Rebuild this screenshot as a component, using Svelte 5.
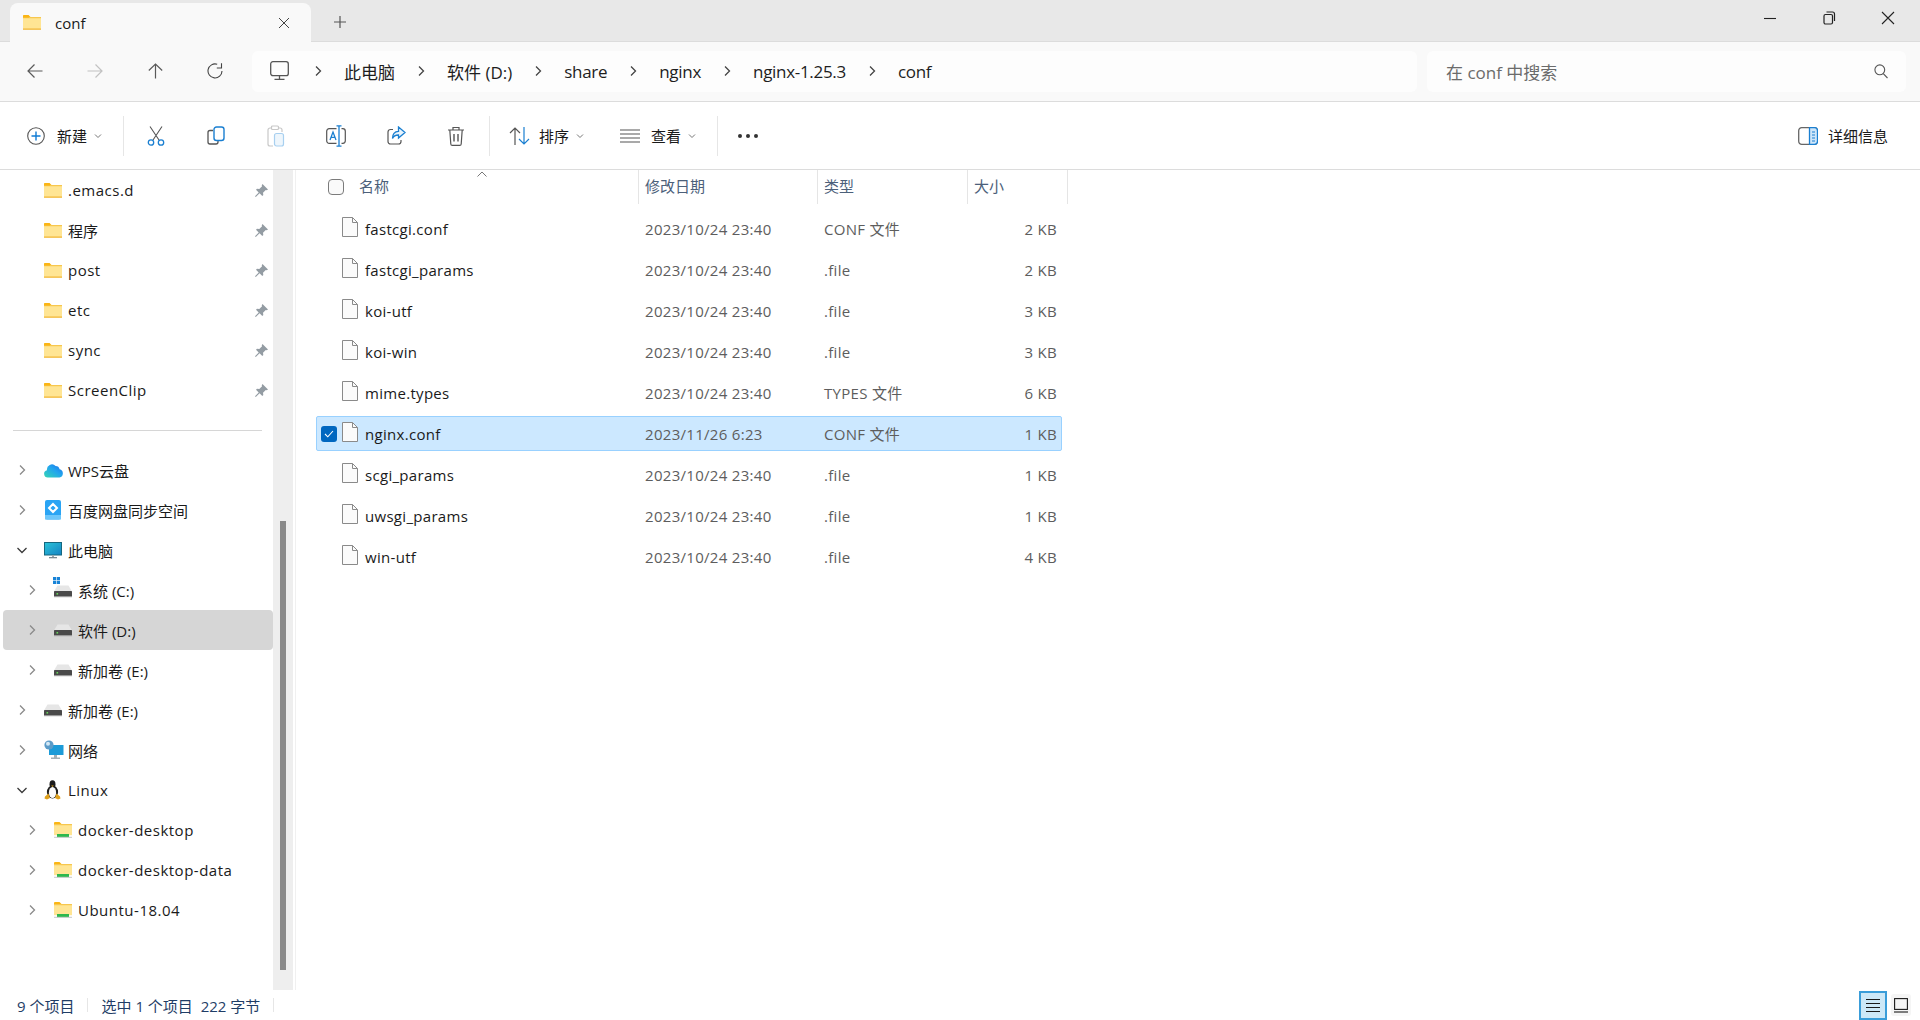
<script>
	const pinned = ['.emacs.d', '程序', 'post', 'etc', 'sync', 'ScreenClip'];

	const tree = [
		{ label: 'WPS云盘', icon: 'wps', level: 1, arrow: 'right' },
		{ label: '百度网盘同步空间', icon: 'baidu', level: 1, arrow: 'right' },
		{ label: '此电脑', icon: 'pc', level: 1, arrow: 'down' },
		{ label: '系统 (C:)', icon: 'sys', level: 2, arrow: 'right' },
		{ label: '软件 (D:)', icon: 'drive', level: 2, arrow: 'right', selected: true },
		{ label: '新加卷 (E:)', icon: 'drive', level: 2, arrow: 'right' },
		{ label: '新加卷 (E:)', icon: 'drive', level: 1, arrow: 'right' },
		{ label: '网络', icon: 'net', level: 1, arrow: 'right' },
		{ label: 'Linux', icon: 'tux', level: 1, arrow: 'down' },
		{ label: 'docker-desktop', icon: 'share', level: 2, arrow: 'right' },
		{ label: 'docker-desktop-data', icon: 'share', level: 2, arrow: 'right' },
		{ label: 'Ubuntu-18.04', icon: 'share', level: 2, arrow: 'right' }
	];

	const crumbs = ['此电脑', '软件 (D:)', 'share', 'nginx', 'nginx-1.25.3', 'conf'];

	const old = '2023/10/24 23:40';
	const files = [
		{ name: 'fastcgi.conf', date: old, type: 'CONF 文件', size: '2 KB' },
		{ name: 'fastcgi_params', date: old, type: '.file', size: '2 KB' },
		{ name: 'koi-utf', date: old, type: '.file', size: '3 KB' },
		{ name: 'koi-win', date: old, type: '.file', size: '3 KB' },
		{ name: 'mime.types', date: old, type: 'TYPES 文件', size: '6 KB' },
		{ name: 'nginx.conf', date: '2023/11/26 6:23', type: 'CONF 文件', size: '1 KB', selected: true },
		{ name: 'scgi_params', date: old, type: '.file', size: '1 KB' },
		{ name: 'uwsgi_params', date: old, type: '.file', size: '1 KB' },
		{ name: 'win-utf', date: old, type: '.file', size: '4 KB' }
	];

	// latin-only labels run a bit wider than the CJK ones
	const isLatin = (s) => /^[\x00-\x7f]+$/.test(s);
</script>

{#snippet chevron(dir, color = '#8a8a8a')}
	<svg class="chev" width="12" height="12" viewBox="0 0 12 12" fill="none" stroke={color} stroke-width="1.3">
		{#if dir === 'right'}
			<path d="M4 1.5 8.5 6 4 10.5" />
		{:else}
			<path d="M1.5 4 6 8.5 10.5 4" />
		{/if}
	</svg>
{/snippet}

{#snippet caret()}
	<svg width="8" height="8" viewBox="0 0 8 8" fill="none" stroke="#777" stroke-width="1">
		<path d="M1 2.5 4 5.5 7 2.5" />
	</svg>
{/snippet}

{#snippet folder()}
	<svg width="18" height="15" viewBox="0 0 18 15">
		<path d="M0 1a1 1 0 0 1 1-1h4.5l2 2H18v3H0z" fill="#fbb514" />
		<rect y="2.2" width="18" height="12.4" fill="#ffe594" />
		<rect y="2.2" width="18" height="1" fill="#f5c344" />
		<rect y="13.6" width="18" height="1" fill="#eeab1f" />
		<rect x="0" y="0.6" width="6" height="2" fill="#fbb514" />
	</svg>
{/snippet}

{#snippet driveIcon()}
	<svg width="18" height="13" viewBox="0 0 18 13">
		<path d="M3.500 0.500h11L18 6.500H0z" fill="#e6e6e6" />
		<rect y="6" width="18" height="5.500" rx="0.600" fill="#4a4a4a" />
		<rect y="11" width="18" height="1.200" fill="#9a9a9a" />
		<rect x="2.500" y="8" width="1.600" height="1.600" fill="#67d35c" />
	</svg>
{/snippet}

{#snippet treeIcon(kind)}
	{#if kind === 'wps'}
		<svg width="20" height="15" viewBox="0 0 20 15">
			<defs>
				<linearGradient id="wpsfill" x1="0" y1="1" x2="1" y2="0">
					<stop offset="0" stop-color="#35d6b4" />
					<stop offset="0.550" stop-color="#22a5ee" />
					<stop offset="1" stop-color="#1a6de8" />
				</linearGradient>
			</defs>
			<path d="M4 14.500a3.700 3.700 0 0 1-1-7.300A5 5 0 0 1 11.600 3a4.200 4.200 0 0 1 4 3.300A4.200 4.200 0 0 1 15.500 14.500z" fill="url(#wpsfill)" />
		</svg>
	{:else if kind === 'baidu'}
		<svg class="baidu" width="16" height="20" viewBox="0 0 16 20">
			<rect width="16" height="19.500" rx="2" fill="#2aa4f4" />
			<rect y="15" width="16" height="4.500" fill="#6dc6fa" />
			<path d="M8 4 12 8 8 12 4 8z" fill="none" stroke="#fff" stroke-width="2" />
		</svg>
	{:else if kind === 'pc'}
		<svg width="18" height="17" viewBox="0 0 18 17">
			<defs>
				<linearGradient id="pcfill" x1="0" y1="0" x2="1" y2="1">
					<stop offset="0" stop-color="#2bc4d8" />
					<stop offset="1" stop-color="#1583c4" />
				</linearGradient>
			</defs>
			<rect x="0.500" y="0.500" width="17" height="12.500" fill="url(#pcfill)" stroke="#15677f" />
			<rect x="8" y="13" width="2" height="2.200" fill="#9aa7ad" />
			<rect x="5" y="15" width="8" height="1.300" fill="#7c8a92" />
		</svg>
	{:else if kind === 'sys'}
		<span class="sys-wrap">
			<svg class="win" width="7" height="7" viewBox="0 0 7 7" fill="#1883d7">
				<rect width="3.200" height="3.200" /><rect x="3.800" width="3.200" height="3.200" />
				<rect y="3.800" width="3.200" height="3.200" /><rect x="3.800" y="3.800" width="3.200" height="3.200" />
			</svg>
			{@render driveIcon()}
		</span>
	{:else if kind === 'drive'}
		{@render driveIcon()}
	{:else if kind === 'net'}
		<svg width="20" height="20" viewBox="0 0 20 20">
			<rect x="5" y="5" width="14.500" height="10" fill="#1c9bd8" />
			<rect x="10" y="15" width="3" height="3" fill="#a4b0b6" />
			<rect x="7" y="17.500" width="9" height="1.500" fill="#a4b0b6" />
			<circle cx="5" cy="5" r="4.600" fill="#5b9bc8" />
			<circle cx="4" cy="3.800" r="2" fill="#d3e8f5" />
		</svg>
	{:else if kind === 'tux'}
		<svg width="17" height="20" viewBox="0 0 17 20">
			<ellipse cx="8.500" cy="4.500" rx="3" ry="4.200" fill="#1c1c1c" />
			<ellipse cx="8.500" cy="12" rx="5.600" ry="6.500" fill="#1c1c1c" />
			<ellipse cx="8.500" cy="12.500" rx="3.600" ry="5.500" fill="#fbfbfb" />
			<path d="M7.200 5.400h2.600L8.500 7z" fill="#e6a91c" />
			<path d="M1 16.500 4.500 13.500 6 18 3 19.500 0.500 18.500zM16 16.500 12.500 13.500 11 18 14 19.500 16.500 18.500z" fill="#dfa11e" />
		</svg>
	{:else}
		<svg width="18" height="16" viewBox="0 0 18 16">
			<path d="M0 1a1 1 0 0 1 1-1h4.500l2 2H18v3H0z" fill="#fbb514" />
			<rect y="2.200" width="18" height="11" fill="#ffe594" />
			<rect y="2.200" width="18" height="1" fill="#f5c344" />
			<rect x="3" y="12" width="12" height="3.200" fill="#2eb84e" />
			<rect y="14.800" width="18" height="1" fill="#c8c8c8" />
		</svg>
	{/if}
{/snippet}

{#snippet fileIcon()}
	<svg class="file-ic" width="16" height="20" viewBox="0 0 16 20">
		<path d="M0.500 0.500h10l5 5v14h-15z" fill="#fbfbfb" stroke="#8a8a8a" />
		<path d="M10.500 0.500v5h5" fill="none" stroke="#8a8a8a" />
	</svg>
{/snippet}

<div class="window">
	<div class="titlebar">
		<div class="tab">
			{@render folder()}
			<span class="tab-title">conf</span>
			<svg class="tab-close" width="12" height="12" viewBox="0 0 12 12" stroke="#444" stroke-width="1">
				<path d="M1 1 11 11M11 1 1 11" />
			</svg>
		</div>
		<svg class="tab-add" width="14" height="14" viewBox="0 0 14 14" stroke="#555" stroke-width="1.200">
			<path d="M7 1v12M1 7h12" />
		</svg>
		<div class="win-btns">
			<svg width="14" height="14" viewBox="0 0 14 14" stroke="#222" stroke-width="1.100" fill="none">
				<path d="M1 7.500h12" />
			</svg>
			<svg width="14" height="14" viewBox="0 0 14 14" stroke="#222" stroke-width="1.200" fill="none">
				<rect x="2" y="3.500" width="8.500" height="9.500" rx="1.500" />
				<path d="M4.500 1h6a2 2 0 0 1 2 2v7" />
			</svg>
			<svg width="14" height="14" viewBox="0 0 14 14" stroke="#222" stroke-width="1.100" fill="none">
				<path d="M1 1 13 13M13 1 1 13" />
			</svg>
		</div>
	</div>

	<div class="addressbar">
		<div class="nav">
			<span class="nav-btn">
				<svg width="16" height="16" viewBox="0 0 16 16" fill="none" stroke="#5a5a5a" stroke-width="1.200">
					<path d="M15.500 8H1M7.500 1.500 1 8l6.500 6.500" />
				</svg>
			</span>
			<span class="nav-btn">
				<svg width="16" height="16" viewBox="0 0 16 16" fill="none" stroke="#c2c2c2" stroke-width="1.200">
					<path d="M.5 8H15M8.500 1.500 15 8l-6.500 6.500" />
				</svg>
			</span>
			<span class="nav-btn">
				<svg width="15" height="16" viewBox="0 0 15 16" fill="none" stroke="#5a5a5a" stroke-width="1.200">
					<path d="M7.500 15.500V1M.8 7.500 7.500 1l6.700 6.500" />
				</svg>
			</span>
			<span class="nav-btn">
				<svg width="16" height="16" viewBox="0 0 16 16" fill="none" stroke="#444" stroke-width="1.100">
					<path d="M10.200 1.300A7 7 0 1 0 15 8" />
					<path d="M14.500 0.300V5H9.800" />
				</svg>
			</span>
		</div>
		<div class="crumbs">
			<svg class="pc-ic" width="19" height="20" viewBox="0 0 19 20" fill="none" stroke="#555" stroke-width="1.300">
				<rect x="0.700" y="0.700" width="17.600" height="14" rx="2.200" />
				<path d="M9.500 15v3M4.500 18.400h10" />
			</svg>
			{#each crumbs as crumb}
				<span class="crumb-sep">{@render chevron('right', '#444')}</span>
				<span class="crumb" class:latin={isLatin(crumb)}>{crumb}</span>
			{/each}
		</div>
		<div class="search">
			<span class="search-hint">在 conf 中搜索</span>
			<svg width="14" height="15" viewBox="0 0 14 15" fill="none" stroke="#555" stroke-width="1.100">
				<circle cx="5.800" cy="5.800" r="4.900" /><path d="M9.300 9.600 13.500 14" />
			</svg>
		</div>
	</div>

	<div class="toolbar">
		<button class="tool tool-new">
			<svg width="18" height="18" viewBox="0 0 18 18" fill="none">
				<circle cx="9" cy="9" r="8.300" stroke="#555" stroke-width="1.100" />
				<path d="M9 4.500v9M4.500 9h9" stroke="#0f7bd4" stroke-width="1.400" />
			</svg>
			<span>新建</span>
			{@render caret()}
		</button>
		<span class="tool-sep"></span>
		<div class="tool-icons">
			<span class="icon-cell">
				<svg width="18" height="20" viewBox="0 0 18 20" fill="none">
					<path d="M3 0.500 12 14M15 0.500 6 14" stroke="#555" stroke-width="1.100" />
					<circle cx="4" cy="16.500" r="2.700" stroke="#1a7fd1" stroke-width="1.300" />
					<circle cx="14" cy="16.500" r="2.700" stroke="#1a7fd1" stroke-width="1.300" />
				</svg>
			</span>
			<span class="icon-cell">
				<svg width="18" height="19" viewBox="0 0 18 19" fill="none">
					<path d="M6 4.500H3a2 2 0 0 0-2 2v9.500a2 2 0 0 0 2 2h6a2 2 0 0 0 2-2v-1.500" stroke="#555" stroke-width="1.300" />
					<rect x="7" y="1" width="10" height="13.500" rx="2.500" stroke="#1a7fd1" stroke-width="1.400" fill="#fff" />
				</svg>
			</span>
			<span class="icon-cell">
				<svg width="18" height="22" viewBox="0 0 18 22" fill="none">
					<path d="M5 3H3a2 2 0 0 0-2 2v14a2 2 0 0 0 2 2h3" stroke="#c8c8c8" stroke-width="1.200" />
					<rect x="4.500" y="1" width="7" height="3.500" rx="1" stroke="#c8c8c8" stroke-width="1.200" />
					<path d="M12 3h1a2 2 0 0 1 2 2v2" stroke="#c8c8c8" stroke-width="1.200" />
					<rect x="7.500" y="8.500" width="9" height="12.500" rx="2" stroke="#a8d0f0" stroke-width="1.200" fill="#eef6fc" />
				</svg>
			</span>
			<span class="icon-cell">
				<svg width="20" height="22" viewBox="0 0 20 22" fill="none">
					<rect x="0.700" y="3.700" width="18.600" height="14.600" rx="2.500" stroke="#555" stroke-width="1.200" />
					<rect x="10.500" y="0" width="5" height="22" fill="#fff" />
					<path d="M13 1v20M10.500 .8h5M10.500 21.200h5" stroke="#1a7fd1" stroke-width="1.300" />
					<path d="M4 15 7 7l3 8M5 12.400h4" stroke="#1a7fd1" stroke-width="1.300" />
				</svg>
			</span>
			<span class="icon-cell">
				<svg width="19" height="19" viewBox="0 0 19 19" fill="none">
					<path d="M6 3.500H3.500A2.500 2.500 0 0 0 1 6v9.500A2.500 2.500 0 0 0 3.500 18h8a2.500 2.500 0 0 0 2.500-2.500V14" stroke="#555" stroke-width="1.200" />
					<path d="M11.500 1 18 6.500 11.500 12V9c-3 0-5 1-6 3.500 0-4.500 2-7 6-7.200z" stroke="#1a7fd1" stroke-width="1.300" fill="#eaf5fd" />
				</svg>
			</span>
			<span class="icon-cell">
				<svg width="18" height="20" viewBox="0 0 18 20" fill="none" stroke="#555" stroke-width="1.200">
					<path d="M1 4h16M6 4V1.500h6V4M2.800 4l1 14a1.500 1.500 0 0 0 1.500 1.400h7.400a1.500 1.500 0 0 0 1.500-1.400l1-14" />
					<path d="M7 8v7.500M11 8v7.500" stroke-width="1.400" />
				</svg>
			</span>
		</div>
		<span class="tool-sep sep-sort"></span>
		<button class="tool tool-sort">
			<svg width="21" height="18" viewBox="0 0 21 18" fill="none" stroke-width="1.200">
				<path d="M6 18V1M1 6l5-5 5 5" stroke="#555" />
				<path d="M15 0v17M10 12l5 5 5-5" stroke="#1a7fd1" />
			</svg>
			<span>排序</span>
			{@render caret()}
		</button>
		<button class="tool tool-view">
			<svg width="20" height="14" viewBox="0 0 20 14" stroke="#555" stroke-width="1.100">
				<path d="M0 1h20M0 5h20M0 9h20M0 13h20" />
			</svg>
			<span>查看</span>
			{@render caret()}
		</button>
		<span class="tool-sep sep-more"></span>
		<div class="dots">
			<i></i><i></i><i></i>
		</div>
		<button class="tool tool-details">
			<svg width="20" height="18" viewBox="0 0 20 18" fill="none">
				<rect x="0.700" y="0.700" width="18.600" height="16.600" rx="3" stroke="#666" stroke-width="1.300" />
				<path d="M11.500 .7h5a3 3 0 0 1 3 3v10.600a3 3 0 0 1-3 3h-5z" fill="#cfe6f9" stroke="#1a7fd1" stroke-width="1.300" />
				<path d="M14 5h3M14 8h3M14 11h3M14 14h3" stroke="#1a7fd1" />
			</svg>
			<span>详细信息</span>
		</button>
	</div>

	<div class="main">
		<nav class="sidebar">
			{#each pinned as name}
				<div class="tree-row level-1">
					<span class="tree-arrow"></span>
					<span class="tree-icon">{@render folder()}</span>
					<span class="tree-label" class:latin={isLatin(name)}>{name}</span>
					<svg class="pin" width="13" height="13" viewBox="0 0 13 13" fill="#939ca3">
						<path d="M7.500 0 13 5.500l-1.200.8-1-.4L8 8.700l.3 2.300-1 1L4.600 9.300 .8 13 0 12.200 3.700 8.400 1 5.700l1-1 2.300.3 2.800-2.800-.4-1z" />
					</svg>
				</div>
			{/each}
			<div class="tree-divider"></div>
			{#each tree as node}
				<div class="tree-row" class:level-1={node.level === 1} class:level-2={node.level === 2} class:selected={node.selected}>
					<span class="tree-arrow">
						{#if node.arrow === 'down'}
							{@render chevron('down', '#3a3a3a')}
						{:else}
							{@render chevron('right')}
						{/if}
					</span>
					<span class="tree-icon">{@render treeIcon(node.icon)}</span>
					<span class="tree-label" class:latin={isLatin(node.label)}>{node.label}</span>
				</div>
			{/each}
		</nav>
		<div class="scrolltrack">
			<div class="scrollthumb"></div>
		</div>

		<section class="list">
			<div class="list-head">
				<div class="col col-name">
					<span class="head-check"></span>
					<span>名称</span>
					<svg class="sort-caret" width="10" height="6" viewBox="0 0 10 6" fill="none" stroke="#777" stroke-width="1">
						<path d="M.5 5.500 5 1l4.500 4.500" />
					</svg>
				</div>
				<div class="col col-date">修改日期</div>
				<div class="col col-type">类型</div>
				<div class="col col-size-head">大小</div>
			</div>
			<div class="rows">
				{#each files as file}
					<div class="row" class:selected={file.selected}>
						<div class="cell-name">
							<span class="check">
								<svg width="10" height="8" viewBox="0 0 10 8" fill="none" stroke="#fff" stroke-width="1.100">
									<path d="M1 4 3.800 6.800 9 1" />
								</svg>
							</span>
							{@render fileIcon()}
							<span class="fname">{file.name}</span>
						</div>
						<div class="cell-meta">{file.date}</div>
						<div class="cell-meta">{file.type}</div>
						<div class="cell-meta cell-size">{file.size}</div>
					</div>
				{/each}
			</div>
		</section>
	</div>

	<footer class="status">
		<span class="status-item">9 个项目</span>
		<span class="status-sep"></span>
		<span class="status-item">选中 1 个项目&nbsp; 222 字节</span>
		<span class="status-sep"></span>
		<div class="view-btns">
			<span class="view-btn active">
				<svg width="14" height="14" viewBox="0 0 14 14" stroke="#1a1a1a" stroke-width="1.100">
					<path d="M0 1.500h14M0 5.500h14M0 9.500h14M0 13.500h14" />
				</svg>
			</span>
			<span class="view-btn">
				<svg width="14" height="15" viewBox="0 0 14 15" fill="none" stroke="#1a1a1a" stroke-width="1.100">
					<rect x="0.600" y="0.600" width="12.800" height="10.800" /><path d="M0 14h14" />
				</svg>
			</span>
		</div>
	</footer>
</div>

<style>
	:global(body) {
		margin: 0;
		background: #fff;
	}

	.window {
		width: 1920px;
		height: 1020px;
		display: flex;
		flex-direction: column;
		overflow: hidden;
		background: #fff;
		color: #1a1a1a;
		font-family: "Open Sans", "Noto Sans CJK SC", sans-serif;
		font-size: 15px;
	}

	button {
		border: none;
		background: none;
		padding: 0;
		font: inherit;
		color: inherit;
	}

	/* title bar */
	.titlebar {
		height: 42px;
		flex-shrink: 0;
		display: flex;
		align-items: flex-end;
		background: #e8e8e8;
		padding-left: 10px;
		box-sizing: border-box;
		border-bottom: 1px solid #dcdcdc;
	}

	.tab {
		width: 301px;
		height: 39px;
		margin-bottom: -1px;
		box-sizing: border-box;
		display: flex;
		align-items: center;
		padding: 0 21px 0 13px;
		background: #f9f9f9;
		border-radius: 8px 8px 0 0;
	}

	.tab-title {
		flex: 1;
		margin-left: 14px;
		font-size: 15px;
	}

	.tab-add {
		margin: 0 0 12px 22px;
	}

	.win-btns {
		margin-left: auto;
		align-self: flex-start;
		display: flex;
		gap: 45px;
		padding: 11px 25px 0 0;
	}

	/* address row */
	.addressbar {
		height: 60px;
		flex-shrink: 0;
		box-sizing: border-box;
		display: flex;
		align-items: center;
		background: #f9f9f9;
		border-bottom: 1px solid #dcdcdc;
		padding: 0 14px 1px 5px;
	}

	.nav {
		display: flex;
		align-items: center;
		margin-right: 7px;
	}

	.nav-btn {
		width: 60px;
		display: flex;
		justify-content: center;
	}

	.crumbs,
	.search {
		height: 41px;
		display: flex;
		align-items: center;
		background: #fdfdfd;
		border-radius: 6px;
		font-size: 17px;
	}

	.crumbs {
		width: 1165px;
		padding-left: 18px;
		box-sizing: border-box;
		margin-right: 10px;
	}

	.pc-ic {
		margin-right: 3px;
	}

	.crumb-sep {
		display: flex;
		margin: 0 20px;
	}

	.crumb {
		white-space: nowrap;
		color: #1e1e1e;
	}

	.crumb.latin {
		letter-spacing: -0.3px;
	}

	.search {
		width: 479px;
		padding: 0 18px 0 19px;
		box-sizing: border-box;
		justify-content: space-between;
	}

	.search-hint {
		color: #6b6b6b;
	}

	/* command bar */
	.toolbar {
		height: 68px;
		flex-shrink: 0;
		box-sizing: border-box;
		display: flex;
		align-items: center;
		border-bottom: 1px solid #dcdcdc;
		background: #fff;
		padding-left: 27px;
	}

	.tool {
		display: flex;
		align-items: center;
		gap: 7px;
		white-space: nowrap;
	}

	.tool-new svg:first-child {
		margin-right: 5px;
	}

	.tool-sort svg:first-child {
		margin-right: 2px;
	}

	.tool-view svg:first-child {
		margin-right: 4px;
	}

	.tool-sep {
		width: 1px;
		height: 40px;
		background: #e6e6e6;
		margin: 0 2px 0 21px;
	}

	.tool-icons {
		display: flex;
		align-items: center;
	}

	.icon-cell {
		width: 60px;
		display: flex;
		justify-content: center;
	}

	.sep-sort {
		margin: 0 19px 0 3px;
	}

	.tool-view {
		margin-left: 36px;
	}

	.sep-more {
		margin: 0 20px 0 21px;
	}

	.dots {
		display: flex;
		gap: 4px;
	}

	.dots i {
		width: 4px;
		height: 4px;
		border-radius: 50%;
		background: #333;
	}

	.tool-details {
		margin-left: auto;
		padding-right: 32px;
		gap: 10px;
	}

	/* body */
	.main {
		flex: 1;
		min-height: 0;
		display: flex;
	}

	.sidebar {
		width: 273px;
		flex-shrink: 0;
	}

	.tree-row {
		height: 40px;
		box-sizing: border-box;
		display: flex;
		align-items: center;
		margin-left: 3px;
		border-radius: 4px;
	}

	.tree-row.selected {
		background: #d6d6d6;
	}

	.tree-row.level-1 {
		padding-left: 13px;
	}

	.tree-row.level-2 {
		padding-left: 23px;
	}

	.tree-arrow {
		width: 12px;
		height: 12px;
		display: flex;
		margin-right: 16px;
	}

	.tree-icon {
		width: 20px;
		display: flex;
		align-items: center;
		justify-content: flex-start;
		margin-right: 4px;
	}

	.baidu {
		margin-left: 1px;
	}

	.tree-label {
		flex: 1;
		white-space: nowrap;
		font-size: 15px;
	}

	.tree-label.latin {
		letter-spacing: 0.5px;
	}

	.pin {
		margin-right: 5px;
	}

	.sys-wrap {
		position: relative;
		display: flex;
		padding-top: 2px;
	}

	.win {
		position: absolute;
		left: -1px;
		top: -6px;
	}

	.tree-divider {
		height: 1px;
		background: #d6d6d6;
		margin: 20px 11px 19px 13px;
	}

	.scrolltrack {
		width: 20px;
		flex-shrink: 0;
		background: #eeeeee;
		box-sizing: border-box;
		padding: 351px 7px 0;
		margin-right: 2px;
	}

	.scrollthumb {
		height: 449px;
		background: #8a8a8a;
	}

	.list {
		flex: 1;
		border-left: 1px solid #f0f0f0;
		padding-left: 20px;
	}

	.list-head {
		height: 34px;
		display: flex;
		color: #4c607a;
	}

	.col {
		box-sizing: border-box;
		display: flex;
		align-items: center;
		padding: 0 0 3px 6px;
		border-right: 1px solid #e5e5e5;
	}

	.col-name {
		position: relative;
		width: 323px;
		padding-left: 12px;
	}

	.col-date {
		width: 179px;
	}

	.col-type {
		width: 150px;
	}

	.col-size-head {
		width: 100px;
	}

	.head-check {
		width: 16px;
		height: 16px;
		box-sizing: border-box;
		border: 1px solid #7b7b7b;
		border-radius: 4px;
		background: #fafafa;
		margin: 3px 15px 0 0;
	}

	.sort-caret {
		position: absolute;
		left: 161px;
		top: 1px;
	}

	.rows {
		display: flex;
		flex-direction: column;
		gap: 6px;
		padding-top: 7px;
	}

	.row {
		width: 746px;
		height: 35px;
		box-sizing: border-box;
		display: grid;
		grid-template-columns: 322px 179px 150px 1fr;
		align-items: center;
		border: 1px solid transparent;
	}

	.row.selected {
		background: #cce8ff;
		border-color: #99d1ff;
		border-radius: 2px;
	}

	.cell-name {
		display: flex;
		align-items: center;
		padding-left: 4px;
	}

	.check {
		width: 16px;
		height: 16px;
		margin-right: 5px;
		border-radius: 3px;
		display: flex;
		align-items: center;
		justify-content: center;
		background: #0067c0;
		visibility: hidden;
	}

	.row.selected .check {
		visibility: visible;
	}

	.file-ic {
		margin-right: 7px;
		margin-top: -3px;
	}

	.fname {
		white-space: nowrap;
		font-size: 15px;
		letter-spacing: 0.3px;
	}

	.cell-meta {
		padding-left: 6px;
		color: #5d5d5d;
		font-size: 15px;
		letter-spacing: 0.3px;
		white-space: nowrap;
	}

	.cell-size {
		text-align: right;
		padding-right: 4px;
	}

	/* status */
	.status {
		height: 30px;
		flex-shrink: 0;
		display: flex;
		align-items: center;
		color: #1f3d66;
		padding-left: 17px;
	}

	.status-sep {
		width: 1px;
		height: 14px;
		background: #e6e6e6;
		margin: 0 13px;
	}

	.view-btns {
		margin-left: auto;
		display: flex;
		align-items: center;
		gap: 4px;
		padding-right: 9px;
	}

	.view-btn {
		width: 20px;
		height: 22px;
		display: flex;
		align-items: center;
		justify-content: center;
		background: #f5f5f5;
		border-radius: 3px;
	}

	.view-btn.active {
		width: 24px;
		height: 25px;
		background: #cde8f7;
		border: 2px solid #3a9dd9;
		border-radius: 0;
	}
</style>
